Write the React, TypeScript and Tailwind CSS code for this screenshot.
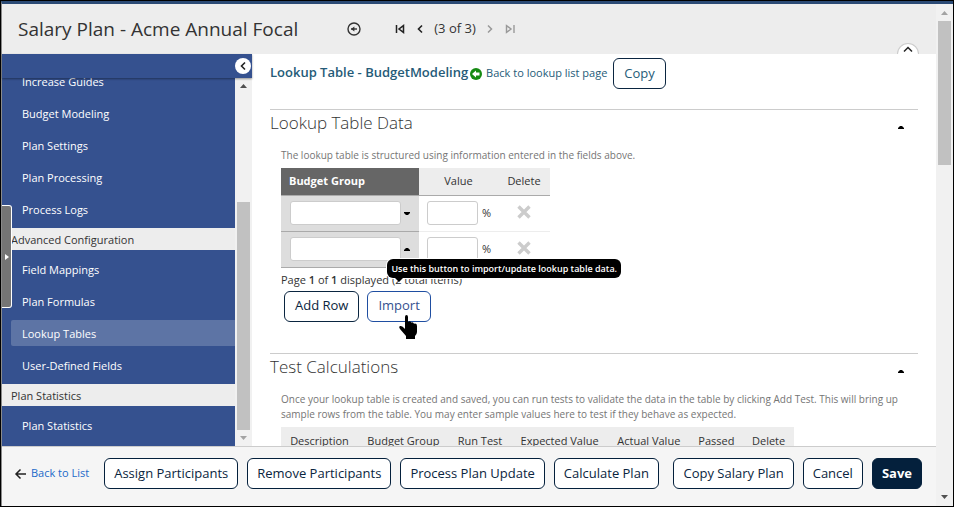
import type { ReactNode } from 'react'
import clsx from 'clsx'

const PLAN_LINKS = ['Increase Guides', 'Budget Modeling', 'Plan Settings', 'Plan Processing', 'Process Logs']
const ADVANCED_LINKS = ['Field Mappings', 'Plan Formulas', 'Lookup Tables', 'User-Defined Fields']
const TEST_COLUMNS = [
  'Description',
  'Budget Group',
  'Run Test',
  'Expected Value',
  'Actual Value',
  'Passed',
  'Delete',
]

export default function App() {
  return (
    <div className="relative flex h-screen overflow-hidden border border-black bg-white font-['Open_Sans',sans-serif] text-[11px] text-[#333]">
      <div className="flex min-w-0 flex-1 flex-col border-t-[3px] border-l border-t-[#2b4a75] border-l-[#8a8a8a]">
        <PageHeader />
        <div className="flex min-h-0 flex-1">
          <Sidebar />
          <main className="min-w-0 flex-1 overflow-hidden px-[18px]">
            <LookupHeading />
            <LookupTableData />
            <TestCalculations />
          </main>
        </div>
        <FooterBar />
      </div>
      <PageScrollbar />
      <button
        type="button"
        aria-label="Open drawer"
        className="absolute top-[204px] left-px flex h-[103px] w-[10px] items-center justify-end rounded-r-[3px] border border-l-0 border-white bg-[#757575] pr-[2px]"
      >
        <svg width="4" height="6" viewBox="0 0 4 6" fill="#fff">
          <path d="M0 0l4 3-4 3z" />
        </svg>
      </button>
    </div>
  )
}

function PageHeader() {
  return (
    <header className="relative flex h-[50px] shrink-0 items-center bg-[#ededed] pl-4">
      <h1 className="text-[19px] leading-6 font-medium whitespace-nowrap">Salary Plan - Acme Annual Focal</h1>
      <button type="button" aria-label="Back" className="ml-12">
        <svg width="16" height="16" viewBox="0 0 16 16" fill="none" stroke="#333">
          <circle cx="8" cy="8" r="6" strokeWidth="1.4" />
          <path d="M5 8h6" strokeWidth="1.4" />
          <path d="M5 8l3.4-2.6v5.2z" fill="#333" stroke="none" />
        </svg>
      </button>
      <nav aria-label="Plans" className="ml-8 flex items-center gap-2">
        <button type="button" aria-label="First">
          <svg width="12" height="12" viewBox="0 0 12 12" fill="none" stroke="#222" strokeWidth="1.5">
            <path d="M2.5 2v8M9.5 2.6v6.8L5 6z" />
          </svg>
        </button>
        <button type="button" aria-label="Previous">
          <svg width="12" height="12" viewBox="0 0 12 12" fill="none" stroke="#222" strokeWidth="1.6">
            <path d="M8 2.5L4.5 6 8 9.5" />
          </svg>
        </button>
        <span className="text-[13px]">(3 of 3)</span>
        <button type="button" aria-label="Next">
          <svg width="12" height="12" viewBox="0 0 12 12" fill="none" stroke="#999" strokeWidth="1.5">
            <path d="M4 2.5L7.5 6 4 9.5" />
          </svg>
        </button>
        <button type="button" aria-label="Last">
          <svg width="12" height="12" viewBox="0 0 12 12" fill="none" stroke="#999" strokeWidth="1.4">
            <path d="M10 2v8M2.5 2.6v6.8L7 6z" />
          </svg>
        </button>
      </nav>
      <button
        type="button"
        aria-label="Collapse header"
        className="absolute right-[17px] bottom-0 flex h-[11px] w-[22px] justify-center rounded-t-full border border-b-0 border-[#ccc] bg-white pt-[2px]"
      >
        <svg width="10" height="7" viewBox="0 0 10 7" fill="none" stroke="#222" strokeWidth="1.5">
          <path d="M1 5.5l4-4 4 4" />
        </svg>
      </button>
    </header>
  )
}

function Sidebar() {
  return (
    <aside className="flex w-[250px] shrink-0 flex-col bg-[#35518f] text-white">
      <div className="z-10 flex h-6 shrink-0 items-center justify-end pr-px shadow-[0_1px_2px_rgba(0,0,0,0.4)]">
        <button
          type="button"
          aria-label="Collapse menu"
          className="flex size-4 items-center justify-center rounded-full bg-white"
        >
          <svg width="8" height="10" viewBox="0 0 8 10" fill="none" stroke="#222" strokeWidth="1.6">
            <path d="M6 1.5L2.5 5 6 8.5" />
          </svg>
        </button>
      </div>
      <div className="flex min-h-0 flex-1">
        <nav aria-label="Plan" className="flex flex-1 flex-col justify-end overflow-hidden pb-0.5">
          <NavGroup links={PLAN_LINKS} />
          <NavHeading>Advanced Configuration</NavHeading>
          <NavGroup links={ADVANCED_LINKS} active="Lookup Tables" />
          <NavHeading>Plan Statistics</NavHeading>
          <NavGroup links={['Plan Statistics']} />
        </nav>
        <div aria-hidden className="flex w-[17px] flex-col items-center bg-[#f1f1f1] py-1.5">
          <Arrow up className="text-[#505050]" />
          <div className="mt-auto mb-1.5 h-[228px] w-[13px] bg-[#c1c1c1]" />
          <Arrow className="text-[#a3a3a3]" />
        </div>
      </div>
    </aside>
  )
}

function NavHeading({ children }: { children: ReactNode }) {
  return <h2 className="h-[22px] shrink-0 bg-[#ededed] pl-[9px] leading-6 text-[#333]">{children}</h2>
}

function NavGroup({ links, active }: { links: string[]; active?: string }) {
  return (
    <ul className="flex shrink-0 flex-col gap-1.5 py-1.5 pl-[9px]">
      {links.map((link) => (
        <li key={link}>
          <a
            href="#"
            className={clsx('block h-[26px] rounded-l-xs pl-[11px] leading-7', link === active && 'bg-[#5d74a5]')}
          >
            {link}
          </a>
        </li>
      ))}
    </ul>
  )
}

function LookupHeading() {
  return (
    <div className="flex h-[55px] pt-1">
      <h2 className="mr-0.5 pt-1 text-[13px] leading-5 font-semibold text-[#255b78]">
        Lookup Table - BudgetModeling
      </h2>
      <a href="#" className="flex h-[30px] items-center gap-1 pt-px text-[#255b78]">
        <svg width="12" height="12" viewBox="0 0 12 12">
          <circle cx="6" cy="6" r="6" fill="#168a12" />
          <path d="M2 6l4-3.6V4.5h3.5v3H6v2.1z" fill="#fff" />
        </svg>
        Back to lookup list page
      </a>
      <button
        type="button"
        className="ml-1.5 h-[31px] rounded-md border border-[#0a2540] px-[10px] text-[13px] font-medium text-[#255b78]"
      >
        Copy
      </button>
    </div>
  )
}

function SectionTitle({ children }: { children: ReactNode }) {
  return (
    <div className="flex items-center justify-between border-t border-[#ccc] pr-[14px]">
      <h3 className="text-[17px] leading-[26px] font-light">{children}</h3>
      <button type="button" aria-label="Collapse section" className="pt-2">
        <SmallArrow up />
      </button>
    </div>
  )
}

function LookupTableData() {
  return (
    <section className="h-[244px]">
      <SectionTitle>Lookup Table Data</SectionTitle>
      <div className="pt-3 pl-[11px]">
        <p className="text-[10px] leading-[15px] text-[#757575]">
          The lookup table is structured using information entered in the fields above.
        </p>
        <table className="mt-[5px] w-[269px] table-fixed border-collapse">
          <thead>
            <tr className="h-[27px] border-b border-[#aaa] bg-[#ededed]">
              <th className="w-[138px] bg-[#666] pl-2 text-left font-bold text-white">Budget Group</th>
              <th className="w-[79px] font-medium">Value</th>
              <th className="font-medium">Delete</th>
            </tr>
          </thead>
          <tbody>
            <GroupRow index={1} />
            <GroupRow index={2} open />
          </tbody>
        </table>
        <p className="mt-[3px] leading-[18px]">
          Page <b className="font-semibold">1</b> of <b className="font-semibold">1</b> displayed (2 total items)
        </p>
        <div className="mt-0.5 flex gap-2 pl-[3px]">
          <button
            type="button"
            className="h-[31px] rounded-md border border-[#0a2540] px-[10px] text-[13px] font-medium text-[#0a2540]"
          >
            Add Row
          </button>
          <div className="relative">
            <button
              type="button"
              aria-describedby="import-tip"
              className="h-[31px] rounded-md border border-[#1f4ea1] px-[10px] text-[13px] font-medium text-[#35518f]"
            >
              Import
            </button>
            <div
              id="import-tip"
              role="tooltip"
              className="absolute -top-8 left-5 rounded-md bg-black px-1 text-[9px] leading-[19px] font-semibold whitespace-nowrap text-white ring-1 ring-white"
            >
              Use this button to import/update lookup table data.
              <span className="absolute top-full left-2 border-x-4 border-t-4 border-x-transparent border-t-black" />
            </div>
            <HandCursor />
          </div>
        </div>
      </div>
    </section>
  )
}

function GroupRow({ index, open }: { index: number; open?: boolean }) {
  return (
    <tr className="h-9 border-b border-[#ededed]">
      <td className="border-b border-[#aaa] bg-[#ddd] pl-[9px]">
        <div className="flex items-center gap-[3px]">
          <input
            aria-label={`Budget group ${index}`}
            className="h-6 w-[111px] rounded-[3px] border border-[#ccc] bg-white px-1"
          />
          <button type="button" aria-label="Show groups">
            <SmallArrow up={open} />
          </button>
        </div>
      </td>
      <td className="pl-2">
        <div className="flex items-center gap-1">
          <input
            aria-label={`Value ${index}`}
            className="h-6 w-[51px] rounded-[3px] border border-[#ccc] bg-white px-1"
          />
          %
        </div>
      </td>
      <td className="pb-1 text-center">
        <button type="button" aria-label={`Delete row ${index}`} className="align-middle">
          <svg width="14" height="14" viewBox="0 0 14 14" stroke="#ccc" strokeWidth="3.4">
            <path d="M1.5 1.5l11 11M12.5 1.5l-11 11" />
          </svg>
        </button>
      </td>
    </tr>
  )
}

function TestCalculations() {
  return (
    <section>
      <SectionTitle>Test Calculations</SectionTitle>
      <div className="pt-3 pl-[11px]">
        <p className="text-[10px] leading-[15px] text-[#757575]">
          Once your lookup table is created and saved, you can run tests to validate the data in the table by clicking
          Add Test. This will bring up sample rows from the table. You may enter sample values here to test if they
          behave as expected.
        </p>
        <table className="mt-[5px] w-[513px]">
          <thead>
            <tr className="h-7 bg-[#ededed]">
              {TEST_COLUMNS.map((col) => (
                <th key={col} className="px-2 font-medium whitespace-nowrap">
                  {col}
                </th>
              ))}
            </tr>
          </thead>
        </table>
      </div>
    </section>
  )
}

function FooterBar() {
  return (
    <footer className="z-10 flex h-[60px] shrink-0 items-start gap-[9px] border-t border-[#ccc] bg-[#f5f5f5] pt-[11px] pr-[14px] pl-3">
      <a href="#" className="mr-1.5 flex h-[31px] shrink-0 items-center gap-1 whitespace-nowrap text-[#1b6ac9]">
        <svg width="13" height="12" viewBox="0 0 13 12" fill="none" stroke="#222" strokeWidth="1.5">
          <path d="M12 6H2M6.5 1.5L2 6l4.5 4.5" />
        </svg>
        Back to List
      </a>
      <FooterButton>Assign Participants</FooterButton>
      <FooterButton>Remove Participants</FooterButton>
      <FooterButton>Process Plan Update</FooterButton>
      <FooterButton>Calculate Plan</FooterButton>
      <div className="ml-auto flex gap-[9px]">
        <FooterButton>Copy Salary Plan</FooterButton>
        <FooterButton>Cancel</FooterButton>
        <FooterButton primary>Save</FooterButton>
      </div>
    </footer>
  )
}

function FooterButton({ children, primary }: { children: ReactNode; primary?: boolean }) {
  return (
    <button
      type="button"
      className={clsx(
        'h-[31px] rounded-md border border-[#04203c] px-[9px] text-[13px] whitespace-nowrap',
        primary ? 'bg-[#04203c] font-bold text-white' : 'bg-white font-medium text-[#0a2540]',
      )}
    >
      {children}
    </button>
  )
}

function PageScrollbar() {
  return (
    <div
      aria-hidden
      className="flex w-[17px] flex-col items-center border-t-[3px] border-[#2b4a75] bg-[#f1f1f1] py-[7px]"
    >
      <Arrow up className="text-[#a3a3a3]" />
      <div className="mt-1.5 mb-auto h-36 w-[13px] bg-[#c1c1c1]" />
      <Arrow className="text-[#505050]" />
    </div>
  )
}

function Arrow({ up, className }: { up?: boolean; className: string }) {
  return (
    <svg width="7" height="4" viewBox="0 0 7 4" fill="currentColor" className={className}>
      <path d={up ? 'M0 4h7L3.5 0z' : 'M0 0h7L3.5 4z'} />
    </svg>
  )
}

function SmallArrow({ up }: { up?: boolean }) {
  return (
    <svg width="6" height="3" viewBox="0 0 6 3" fill="#000">
      <path d={up ? 'M0 3V2l2-2h2l2 2v1z' : 'M0 0v1l2 2h2l2-2V0z'} />
    </svg>
  )
}

function HandCursor() {
  return (
    <svg aria-hidden width="20" height="26" viewBox="0 0 20 26" className="pointer-events-none absolute top-6 left-8">
      <path
        d="M6 2Q6 0 7.5 0Q9 0 9 2V7Q11 5.500 12.2 7.500Q14.2 6.500 15 8.700Q18 8 18 11V17Q18 19 16 21V24H7V21L1 14Q-.5 12 1 11Q3 10.500 5 13L6 14Z"
        fill="#000"
      />
    </svg>
  )
}
